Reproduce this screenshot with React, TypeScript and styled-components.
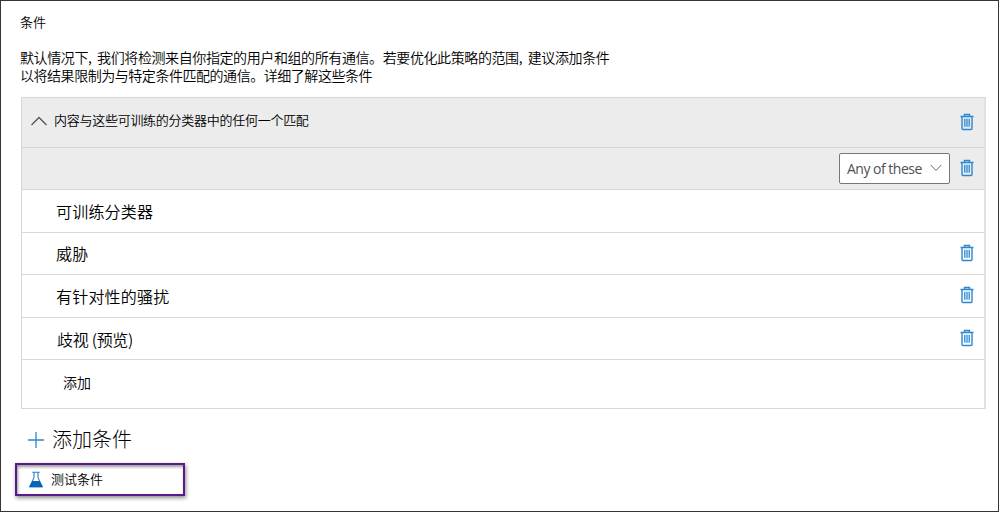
import React from 'react';
import styled, { createGlobalStyle } from 'styled-components';

interface TextProps {
  size: number;
  spacing?: number;
  gap?: number;
  left?: number;
  drop?: number;
  lift?: number;
}

const colors = {
  text: '#000000',
  border: '#d6d6d6',
  shaded: '#ececec',
  blue: '#2b88d0',
  purple: '#5b1a8c',
};

const GlobalStyle = createGlobalStyle`
  body {
    margin: 0;
    background: #ffffff;
  }
  * {
    box-sizing: border-box;
  }
`;

const Page = styled.main`
  width: 999px;
  height: 512px;
  padding: 12px 13px 0 20px;
  border: 1px solid #363636;
  color: ${colors.text};
  font-family: 'Noto Sans CJK SC', sans-serif;
  overflow: hidden;
`;

const Text = styled.span<TextProps>`
  display: block;
  font-size: ${(p) => p.size}px;
  font-weight: ${(p) => (p.size > 16 ? 300 : 350)};
  letter-spacing: ${(p) => p.spacing || 0}px;
  word-spacing: ${(p) => p.gap || 0}px;
  line-height: 18px;
  margin-left: ${(p) => p.left || 0}px;
  padding-top: ${(p) => p.drop || 0}px;
  padding-bottom: ${(p) => p.lift || 0}px;
  white-space: nowrap;
`;

const Intro = styled.section`
  height: 84px;
  margin-left: -1px;
`;

const Description = styled.div`
  margin-top: 17px;
`;

const Table = styled.section`
  width: 965px;
  border: 1px solid ${colors.border};
  border-right: 2px solid #e2e2e2;
`;

const Row = styled.div<{ height: number; shaded?: boolean }>`
  display: flex;
  align-items: center;
  height: ${(p) => p.height}px;
  padding-right: 10px;
  background: ${(p) => (p.shaded ? colors.shaded : '#ffffff')};
  border-bottom: 1px solid ${colors.border};

  &:last-child {
    border-bottom: 0;
  }
`;

const Spacer = styled.div`
  flex: 1;
`;

const Chevron = styled.svg`
  margin: 0 1px 3px 8px;
`;

const Trash = styled.svg`
  margin-bottom: 2px;
`;

const Select = styled.button`
  display: flex;
  align-items: center;
  justify-content: space-between;
  width: 111px;
  height: 31px;
  margin-right: 10px;
  padding: 0 7px 1px;
  border: 1px solid #777777;
  border-radius: 2px;
  background: #ffffff;
  color: #505050;
  font-family: 'Open Sans', sans-serif;
  font-size: 14px;
  letter-spacing: -0.5px;
`;

const AddCondition = styled.div`
  display: flex;
  align-items: center;
  height: 54px;
  padding: 8px 0 0 7px;
`;

const TestCondition = styled.div`
  display: flex;
  align-items: center;
  width: 170px;
  height: 33px;
  margin-left: -6px;
  padding-left: 12px;
  border: 2px solid ${colors.purple};
  box-shadow: 1px 2px 4px rgba(0, 0, 0, 0.45), inset 1px 2px 3px rgba(0, 0, 0, 0.4);
`;

const TrashIcon = () => (
  <Trash width="14" height="18" viewBox="0 0 14 18" fill="none" stroke={colors.blue}>
    <path d="M.5 3.5h13M4.5 3V1.5h5V3" strokeWidth="1.4" />
    <path d="M2 4v11.5q0 1 1 1h8q1 0 1-1V4" strokeWidth="1.4" />
    <path d="M4.8 5.8v8M7 5.8v8M9.2 5.8v8" strokeWidth="1.3" />
  </Trash>
);

const FlaskIcon = () => (
  <svg width="14" height="17" viewBox="0 0 14 17">
    <path d="M3.3 1.3h7.4M5 1.5v5L1 15.6h12L9 6.5v-5" fill="none" stroke="#2b7fc4" strokeWidth="1.1" />
    <path d="M3.4 10h7.2l3.2 5.2q.3 1-.8 1H1q-1.1 0-.8-1z" fill="#0864b5" />
  </svg>
);

const classifiers = [
  { name: '威胁', height: 42, left: 34, lift: 1, spacing: 0.2 },
  { name: '有针对性的骚扰', height: 43, left: 34, lift: 1, spacing: 0.2 },
  { name: '歧视 (预览)', height: 42, left: 35, drop: 1, spacing: -0.3 },
];

const App = () => (
  <>
    <GlobalStyle />
    <Page>
      <Intro>
        <Text size={13}>条件</Text>
        <Description>
          <Text size={14} spacing={-0.4} gap={3}>
            默认情况下, 我们将检测来自你指定的用户和组的所有通信。若要优化此策略的范围, 建议添加条件
          </Text>
          <Text size={14} spacing={-0.46}>
            以将结果限制为与特定条件匹配的通信。详细了解这些条件
          </Text>
        </Description>
      </Intro>
      <Table>
        <Row height={50} shaded>
          <Chevron width="18" height="10" viewBox="0 0 18 10" fill="none" stroke="#555555" strokeWidth="1.3">
            <path d="M1.5 9 9 1.5 16.5 9" />
          </Chevron>
          <Text size={13} spacing={-0.27} left={5} lift={5}>
            内容与这些可训练的分类器中的任何一个匹配
          </Text>
          <Spacer />
          <TrashIcon />
        </Row>
        <Row height={42} shaded>
          <Spacer />
          <Select>
            Any of these
            <svg width="12" height="8" viewBox="0 0 12 8" fill="none" stroke="#666666">
              <path d="m.8 1 5.2 5.5L11.2 1" />
            </svg>
          </Select>
          <TrashIcon />
        </Row>
        <Row height={43}>
          <Text size={16} spacing={0.2} left={34} lift={1}>
            可训练分类器
          </Text>
        </Row>
        {classifiers.map((item) => (
          <Row key={item.name} height={item.height}>
            <Text size={16} spacing={item.spacing} left={item.left} drop={item.drop} lift={item.lift}>
              {item.name}
            </Text>
            <Spacer />
            <TrashIcon />
          </Row>
        ))}
        <Row height={48}>
          <Text size={14} left={41} lift={4}>
            添加
          </Text>
        </Row>
      </Table>
      <AddCondition>
        <svg width="16" height="16" viewBox="0 0 16 16" fill="none" stroke={colors.blue} strokeWidth="1.3">
          <path d="M8 0v16M0 8h16" />
        </svg>
        <Text size={20} left={8} lift={2}>
          添加条件
        </Text>
      </AddCondition>
      <TestCondition>
        <FlaskIcon />
        <Text size={13} left={8} lift={2}>
          测试条件
        </Text>
      </TestCondition>
    </Page>
  </>
);

export default App;
